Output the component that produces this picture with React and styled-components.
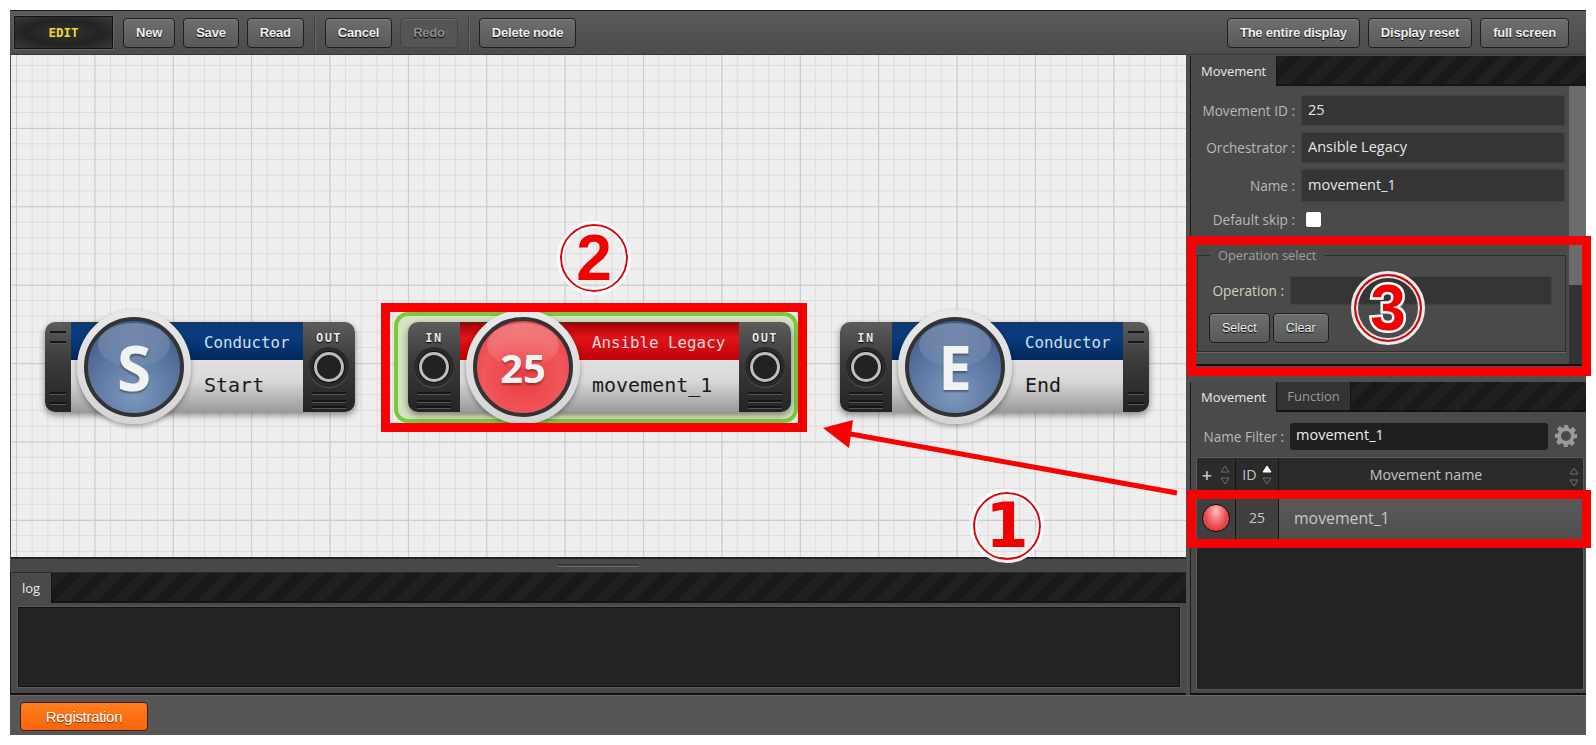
import React from "react";
import styled, { createGlobalStyle, css } from "styled-components";

const Global = createGlobalStyle`
  html, body { margin: 0; padding: 0; background: #fff; overflow: hidden; }
  body { font-family: "Liberation Sans", Arial, sans-serif; }
  * { box-sizing: border-box; }
`;

const Page = styled.div`
  position: relative;
  width: 1596px;
  height: 745px;
  padding: 10px 10px 10px 10px;
`;
const Frame = styled.div`
  width: 1576px;
  height: 725px;
  display: flex;
  flex-direction: column;
  background: #525252;
  border-top: 1px solid #10202c;
`;
const Toolbar = styled.div`
  height: 44px;
  flex: none;
  display: flex;
  align-items: center;
  padding: 0 17px 0 4px;
  gap: 8px;
  background: linear-gradient(#5a5a5a, #4c4c4c);
  border-bottom: 1px solid #3a3a3a;
`;
const ModeDisplay = styled.div`
  width: 99px;
  height: 33px;
  display: flex;
  align-items: center;
  justify-content: center;
  color: #f3d43a;
  font: bold 12.5px "DejaVu Sans Mono", monospace;
  background: radial-gradient(ellipse at center, #333 0%, #232323 55%, #3a3a3a 100%);
  border: 1px solid #111;
  box-shadow: 0 0 0 1px #666;
  margin-right: 2px;
`;
const Button = styled.button`
  height: 30px;
  padding: 0 ${p => p.$pad ?? 12}px;
  flex: none;
  color: ${p => p.disabled ? "#8c8c8c" : "#efefef"};
  font: ${p => p.$small ? "12.5px" : "bold 13px"} "Liberation Sans", Arial, sans-serif;
  letter-spacing: ${p => p.$small ? 0 : -0.2}px;
  text-shadow: 0 1px 1px #000;
  background: ${p => p.disabled ? "#555" : "linear-gradient(#6e6e6e, #595959)"};
  border: 1px solid ${p => p.disabled ? "#444" : "#1e1e1e"};
  border-radius: 4px;
  box-shadow: inset 0 1px 0 rgba(255,255,255,.12);
`;
const ToolDivider = styled.div`
  width: 1px;
  height: 36px;
  margin: 0 2px;
  background: #404040;
  box-shadow: 1px 0 0 #666;
`;
const Spacer = styled.div`
  flex: 1;
`;
const Middle = styled.div`
  height: 640px;
  flex: none;
  display: flex;
  gap: 4px;
  background: #4e4e4e;
`;
const LeftColumn = styled.div`
  width: 1176px;
  flex: none;
  display: flex;
  flex-direction: column;
`;
const RightColumn = styled.div`
  flex: 1;
  min-width: 0;
  display: flex;
  flex-direction: column;
  gap: 16px;
  padding-top: 1px;
`;
const Canvas = styled.div`
  position: relative;
  height: 504px;
  flex: none;
  margin-left: 1px;
  border-bottom: 2px solid #222;
  background-color: #eeeeee;
  background-image:
    linear-gradient(90deg, #cbcbcb 1px, transparent 1px),
    linear-gradient(#cbcbcb 1px, transparent 1px),
    linear-gradient(90deg, #dcdcdc 1px, transparent 1px),
    linear-gradient(#dcdcdc 1px, transparent 1px);
  background-size: 78.4px 78.4px, 78.4px 78.4px, 15.68px 15.68px, 15.68px 15.68px;
  background-position: 5px 73px, 5px 73px, 5px 10px, 5px 10px;
`;
const Splitter = styled.div`
  height: 14px;
  flex: none;
  display: flex;
  align-items: center;
  justify-content: center;
  background: #484848;
  border-bottom: 1px solid #2a2a2a;
`;
const Grip = styled.div`
  width: 82px;
  height: 3px;
  background: #3a3a3a;
  border-bottom: 1px solid #707070;
  border-radius: 2px;
`;
const Panel = styled.div`
  display: flex;
  flex-direction: column;
  flex: ${p => p.$grow ? 1 : "none"};
  height: ${p => p.$h ? p.$h + "px" : "auto"};
  background: #4a4a4a;
  border-left: 1px solid #1c1c1c;
  border-bottom: 2px solid #111;
  min-height: 0;
`;
const TabBar = styled.div`
  height: 30px;
  flex: none;
  display: flex;
  background: repeating-linear-gradient(-45deg, #191919 0 10px, #202020 10px 20px);
  border-bottom: 2px solid #141414;
`;
const Tab = styled.div`
  height: ${p => p.$active ? 30 : 28}px;
  padding: 0 ${p => p.$pad ?? 10}px;
  display: flex;
  align-items: center;
  color: ${p => p.$active ? "#e8e8e8" : "#9a9a9a"};
  font: 13px "Open Sans", sans-serif;
  background: ${p => p.$active ? "#4a4a4a" : "#333"};
  border-right: 1px solid #141414;
`;
const LogBody = styled.div`
  flex: 1;
  margin: 4px 6px 6px 7px;
  background: #232323;
  border: 1px solid #111;
  box-shadow: 0 0 0 1px #5a5a5a;
`;
const ScrollArea = styled.div`
  flex: 1;
  display: flex;
  min-height: 0;
`;
const PanelContent = styled.div`
  flex: 1;
  display: flex;
  flex-direction: column;
  padding: 9px 3px 0 0;
  gap: 6px;
`;
const Scrollbar = styled.div`
  width: 17px;
  flex: none;
  background: #333;
`;
const ScrollThumb = styled.div`
  height: 199px;
  background: #6c6c6c;
`;
const FieldRow = styled.div`
  display: flex;
  align-items: center;
  gap: 6px;
  padding-right: ${p => p.$right ?? 0}px;
`;
const Label = styled.label`
  flex: none;
  width: ${p => p.$w ?? 104}px;
  text-align: right;
  color: ${p => p.$bright ? "#d4d0c0" : "#b8b8b8"};
  font: 13.6px "Open Sans", sans-serif;
  white-space: nowrap;
`;
const FieldValue = styled.div`
  flex: 1;
  height: ${p => p.$h ?? 31}px;
  display: flex;
  align-items: center;
  padding: 0 6px 2px;
  color: #e6e6e6;
  font: 14.5px "Open Sans", sans-serif;
  background: #353535;
  border: 1px solid #424242;
`;
const Check = styled.div`
  width: 15px;
  height: 15px;
  margin-left: 5px;
  background: #fff;
  border-radius: 2px;
`;
const SkipRow = styled(FieldRow)`
  height: 15px;
  margin-top: 4px;
`;
const OperationBox = styled.fieldset`
  margin: 13px 0 0 6px;
  padding: 12px 13px 9px 11px;
  width: 369px;
  height: 106px;
  flex: none;
  border: 1px solid #2e2e2e;
  box-shadow: 0 1px 0 #666;
  display: flex;
  flex-direction: column;
  gap: 8px;
  min-width: 0;
`;
const Legend = styled.legend`
  margin-left: 1px;
  padding: 0 8px;
  color: #a0a0a0;
  font: 12.8px "Open Sans", sans-serif;
`;
const ButtonRow = styled.div`
  display: flex;
  gap: 3px;
`;
const FilterRow = styled.div`
  display: flex;
  align-items: center;
  gap: 6px;
  padding: 10px 8px 0 0;
  height: 38px;
  flex: none;
`;
const FilterInput = styled.div`
  flex: 1;
  height: 27px;
  display: flex;
  align-items: center;
  padding: 0 6px 3px;
  color: #eee;
  font: 14.5px "Open Sans", sans-serif;
  background: #1f1f1f;
  border-radius: 3px;
`;
const ListBox = styled.div`
  flex: 1;
  margin: 8px 3px 4px 6px;
  display: flex;
  flex-direction: column;
  background: #232323;
  box-shadow: 0 0 0 1px #5a5a5a;
  min-height: 0;
`;
const HeadRow = styled.div`
  height: 33px;
  flex: none;
  display: grid;
  grid-template-columns: 39px 43px 1fr;
  background: #2b2b2b;
`;
const HeadCell = styled.div`
  position: relative;
  display: flex;
  align-items: center;
  justify-content: center;
  gap: ${p => p.$gap ?? 4}px;
  padding: ${p => p.$last ? "0 10px 0 0" : "0"};
  color: #c4c4c4;
  font: 14.2px "Open Sans", sans-serif;
  border-right: ${p => p.$last ? "none" : "1px solid #161616"};
`;
const Plus = styled.span`
  font-size: 18px;
  font-weight: 600;
`;
const Sorter = styled.div`
  display: flex;
  flex-direction: column;
  gap: 4px;
  flex: none;
`;
const NameSorter = styled(Sorter)`
  position: absolute;
  right: 4px;
  top: 9px;
`;
const CaretIcon = styled.svg`
  display: block;
  width: 10px;
  height: 8px;
`;
const BodyRow = styled.div`
  height: 49px;
  flex: none;
  display: grid;
  grid-template-columns: 39px 43px 1fr;
  border-bottom: 1px solid #111;
`;
const BodyCell = styled.div`
  display: flex;
  align-items: center;
  justify-content: ${p => p.$name ? "flex-start" : "center"};
  padding: 5px 0 0 ${p => p.$name ? 15 : 0}px;
  color: #c8c8c8;
  font: ${p => p.$name ? 15.8 : 14}px "Open Sans", sans-serif;
  background: ${p => p.$name ? "linear-gradient(#5c5c5c, #4e4e4e)" : "#3f3f3f"};
  border-right: ${p => p.$name ? "none" : "1px solid #161616"};
`;
const Ball = styled.div`
  width: 28px;
  height: 28px;
  border-radius: 50%;
  border: 1px solid #200;
  background: radial-gradient(ellipse at 50% 25%, #ffc0c0 0%, #f57f7f 30%, #e53f46 65%, #f37a7a 100%);
`;
const Footer = styled.div`
  flex: 1;
  display: flex;
  align-items: center;
  padding: 2px 0 0 10px;
  border-top: 1px solid #6a6a6a;
  background: #565656;
`;
const RegisterButton = styled.button`
  width: 128px;
  height: 29px;
  color: #fff;
  font: 15px "Liberation Sans", Arial, sans-serif;
  letter-spacing: -0.3px;
  text-shadow: 0 1px 1px #7a3300;
  background: linear-gradient(#ff7d1e, #f9640c);
  border: 1px solid #4a2000;
  border-radius: 4px;
`;

/* Nodes on the free canvas */
const NodeHalo = styled.div`
  position: absolute;
  left: ${p => p.$x}px;
  top: 257px;
  width: 404px;
  height: 111px;
  border: 4px solid #7cc83c;
  border-radius: 14px;
  background: #d6e4c4;
`;
const NodeWrap = styled.div`
  position: absolute;
  left: ${p => p.$x}px;
  top: 267px;
  width: ${p => p.$w}px;
  height: 90px;
  display: flex;
  border-radius: 10px;
  box-shadow: 0 3px 7px rgba(0,0,0,.45);
`;
const Terminal = styled.div`
  position: relative;
  flex: none;
  width: ${p => p.$wide ? 52 : 26}px;
  background: linear-gradient(#5c5c5c, #3a3a3a 45%, #242424);
  border-radius: ${p => p.$side === "left" ? "10px 0 0 10px" : "0 10px 10px 0"};
  display: flex;
  flex-direction: column;
  align-items: center;
`;
const TermLabel = styled.div`
  margin-top: 9px;
  height: 14px;
  color: #e8e8e8;
  font: bold 12px "DejaVu Sans Mono", monospace;
  letter-spacing: 1.5px;
  text-shadow: 0 1px 1px #000;
`;
const Port = styled.div`
  margin-top: 2px;
  width: 40px;
  height: 40px;
  border-radius: 50%;
  display: flex;
  align-items: center;
  justify-content: center;
  background: #2a2a2a;
  box-shadow: 0 1px 0 #555;
`;
const PortHole = styled.div`
  width: 30px;
  height: 30px;
  border-radius: 50%;
  background: #222;
  border: 3px solid #bdbdbd;
  box-shadow: 0 0 0 1px #111;
`;
const Vent = styled.div`
  position: absolute;
  left: ${p => p.$wide ? 9 : 5}px;
  right: ${p => p.$wide ? 9 : 5}px;
  top: ${p => p.$top}px;
  height: 2px;
  background: #161616;
  box-shadow: 0 1px 0 #555;
`;
const NodeBody = styled.div`
  flex: 1;
  display: flex;
  flex-direction: column;
  padding-left: ${p => p.$textLeft}px;
  position: relative;
  background: linear-gradient(#f0f0f0, #d8d8d8 65%, #9a9a9a);
`;
const NodeStrip = styled.div`
  position: absolute;
  left: 0;
  right: 0;
  top: 0;
  height: 38px;
  background: ${p => p.$red
    ? "linear-gradient(#a80000, #e0141b 40%, #c00005)"
    : "linear-gradient(#0b3a78, #0a3b7c 40%, #00285f)"};
  border-top: 1px solid #333;
`;
const NodeType = styled.div`
  position: relative;
  height: 40px;
  display: flex;
  align-items: center;
  color: ${p => p.$red ? "#ffd9d9" : "#cfe0f4"};
  font: 15.8px "DejaVu Sans Mono", monospace;
  white-space: nowrap;
`;
const NodeName = styled.div`
  position: relative;
  height: 46px;
  display: flex;
  align-items: center;
  color: #1a1a1a;
  font: 20px "DejaVu Sans Mono", monospace;
  white-space: nowrap;
`;
const Disc = styled.div`
  position: absolute;
  left: ${p => p.$x}px;
  top: 0;
  margin-top: -12px;
  width: 114px;
  height: 114px;
  border-radius: 50%;
  display: flex;
  align-items: center;
  justify-content: center;
  background: linear-gradient(#e8e8e8, #d4d4d4);
  box-shadow: 0 2px 5px rgba(0,0,0,.35);
`;
const DiscFace = styled.div`
  position: relative;
  overflow: hidden;
  width: 100px;
  height: 100px;
  border-radius: 50%;
  border: 4px solid #333;
  display: flex;
  align-items: center;
  justify-content: center;
  background: ${p => p.$red
    ? "radial-gradient(circle at 50% 60%, #ec3c42 0%, #f0565a 55%, #e23c42 100%)"
    : "radial-gradient(circle at 50% 78%, #7f99bd 0%, #56739d 55%, #335082 100%)"};
`;
const Gloss = styled.div`
  position: absolute;
  left: 10px;
  right: 10px;
  top: 2px;
  height: 44px;
  border-radius: 50%;
  background: linear-gradient(rgba(255,255,255,.26), rgba(255,255,255,.05));
`;
const DiscLetter = styled.div`
  position: relative;
  color: #f2f2f2;
  font: bold ${p => p.$size}px "Open Sans", sans-serif;
  text-shadow: 0 2px 2px rgba(0,0,0,.35);
`;

/* Annotations over the page */
const Highlight = styled.div`
  position: absolute;
  left: ${p => p.$x}px;
  top: ${p => p.$y}px;
  width: ${p => p.$w}px;
  height: ${p => p.$h}px;
  border: ${p => p.$b}px solid #fa0000;
  pointer-events: none;
`;
const NumberMark = styled.div`
  position: absolute;
  left: ${p => p.$x - 34}px;
  top: ${p => p.$y - 34}px;
  width: 68px;
  height: 68px;
  border-radius: 50%;
  display: flex;
  align-items: center;
  justify-content: center;
  border: 2px solid #e0000a;
  outline: 3px solid rgba(255,255,255,.9);
  outline-offset: 0;
  box-shadow: inset 0 0 0 2px rgba(255,255,255,.85);
  color: #f20000;
  font: bold ${p => p.$serif ? "62px \"DejaVu Sans\"" : "64px \"Liberation Sans\""}, sans-serif;
  line-height: 1;
  ${p => p.$halo && css`
    -webkit-text-stroke: 5px #fff;
    paint-order: stroke fill;
  `}
`;
const ArrowLayer = styled.svg`
  position: absolute;
  left: 0;
  top: 0;
  width: 1596px;
  height: 745px;
  pointer-events: none;
`;

const Gear = () => (
  <svg width="24" height="24" viewBox="0 0 24 24" style={{ flex: "none" }}>
    <path
      fill="#9a9a9a"
      fillRule="evenodd"
      d="M10 1h4l.6 3.1 1.9.8 2.6-1.8 2.8 2.8-1.8 2.6.8 1.9L23 10v4l-3.1.6-.8 1.9 1.8 2.6-2.8 2.8-2.6-1.8-1.9.8L14 23h-4l-.6-3.1-1.9-.8-2.6 1.8-2.8-2.8 1.8-2.6-.8-1.9L1 14v-4l3.1-.6.8-1.9-1.8-2.6 2.8-2.8 2.6 1.8 1.9-.8L10 1zm2 6a5 5 0 1 0 0 10 5 5 0 0 0 0-10z"
    />
  </svg>
);

const Caret = ({ down, on }) => (
  <CaretIcon viewBox="0 0 10 8">
    <polygon
      points={down ? "1,1 9,1 5,7" : "5,1 9,7 1,7"}
      fill={on ? "#fff" : "none"}
      stroke={on ? "#fff" : "#6e6e6e"}
      strokeWidth="1"
    />
  </CaretIcon>
);

const Term = ({ side, label }) => (
  <Terminal $side={side} $wide>
    <TermLabel>{label}</TermLabel>
    <Port><PortHole /></Port>
    <Vent $wide $top={70} />
    <Vent $wide $top={78} />
    <Vent $wide $top={84} />
  </Terminal>
);
const Handle = ({ side }) => (
  <Terminal $side={side}>
    <Vent $top={9} />
    <Vent $top={19} />
    <Vent $top={70} />
    <Vent $top={80} />
  </Terminal>
);

const Node = ({ x, w, left, right, type, name, mark, markSize, red, discX, textLeft }) => (
  <NodeWrap $x={x} $w={w}>
    {left}
    <NodeBody $textLeft={textLeft}>
      <NodeStrip $red={red} />
      <NodeType $red={red}>{type}</NodeType>
      <NodeName>{name}</NodeName>
      <Disc $x={discX}>
        <DiscFace $red={red}>
          <Gloss />
          <DiscLetter $size={markSize}>{mark}</DiscLetter>
        </DiscFace>
      </Disc>
    </NodeBody>
    {right}
  </NodeWrap>
);

export default function App() {
  return (
    <Page>
      <Global />
      <Frame>
        <Toolbar>
          <ModeDisplay>EDIT</ModeDisplay>
          <Button>New</Button>
          <Button>Save</Button>
          <Button>Read</Button>
          <ToolDivider />
          <Button>Cancel</Button>
          <Button disabled>Redo</Button>
          <ToolDivider />
          <Button>Delete node</Button>
          <Spacer />
          <Button>The entire display</Button>
          <Button>Display reset</Button>
          <Button>full screen</Button>
        </Toolbar>
        <Middle>
          <LeftColumn>
            <Canvas>
              <NodeHalo $x={383} />
              <Node x={34} w={310} left={<Handle side="left" />}
                right={<Term side="right" label="OUT" />}
                type="Conductor" name="Start" mark="S" markSize={62}
                discX={6} textLeft={133} />
              <Node x={397} w={383} left={<Term side="left" label="IN" />}
                right={<Term side="right" label="OUT" />}
                type="Ansible Legacy" name="movement_1" mark="25" markSize={40} red
                discX={6} textLeft={132} />
              <Node x={829} w={309} left={<Term side="left" label="IN" />}
                right={<Handle side="right" />}
                type="Conductor" name="End" mark="E" markSize={60}
                discX={6} textLeft={133} />
            </Canvas>
            <Splitter><Grip /></Splitter>
            <Panel $grow>
              <TabBar><Tab $active $pad={11}>log</Tab></TabBar>
              <LogBody />
            </Panel>
          </LeftColumn>
          <RightColumn>
            <Panel $h={310}>
              <TabBar><Tab $active>Movement</Tab></TabBar>
              <ScrollArea>
                <PanelContent>
                  <FieldRow $right={1}><Label>Movement ID :</Label><FieldValue>25</FieldValue></FieldRow>
                  <FieldRow $right={1}><Label>Orchestrator :</Label><FieldValue>Ansible Legacy</FieldValue></FieldRow>
                  <FieldRow $right={1}><Label>Name :</Label><FieldValue $h={33}>movement_1</FieldValue></FieldRow>
                  <SkipRow><Label>Default skip :</Label><Check /></SkipRow>
                  <OperationBox>
                    <Legend>Operation select</Legend>
                    <FieldRow>
                      <Label $w={75} $bright>Operation :</Label>
                      <FieldValue $h={29} />
                    </FieldRow>
                    <ButtonRow>
                      <Button $small $pad={12}>Select</Button>
                      <Button $small $pad={12}>Clear</Button>
                    </ButtonRow>
                  </OperationBox>
                </PanelContent>
                <Scrollbar><ScrollThumb /></Scrollbar>
              </ScrollArea>
            </Panel>
            <Panel $grow>
              <TabBar>
                <Tab $active>Movement</Tab>
                <Tab $pad={10}>Function</Tab>
              </TabBar>
              <FilterRow>
                <Label $w={93}>Name Filter :</Label>
                <FilterInput>movement_1</FilterInput>
                <Gear />
              </FilterRow>
              <ListBox>
                <HeadRow>
                  <HeadCell $gap={8}><Plus>+</Plus><Sorter><Caret /><Caret down /></Sorter></HeadCell>
                  <HeadCell $gap={5}>ID<Sorter><Caret on /><Caret down /></Sorter></HeadCell>
                  <HeadCell $last>Movement name<NameSorter><Caret /><Caret down /></NameSorter></HeadCell>
                </HeadRow>
                <BodyRow>
                  <BodyCell><Ball /></BodyCell>
                  <BodyCell>25</BodyCell>
                  <BodyCell $name>movement_1</BodyCell>
                </BodyRow>
              </ListBox>
            </Panel>
          </RightColumn>
        </Middle>
        <Footer><RegisterButton>Registration</RegisterButton></Footer>
      </Frame>

      <Highlight $x={381} $y={303} $w={426} $h={129} $b={9} />
      <Highlight $x={1187} $y={236} $w={404} $h={140} $b={9} />
      <Highlight $x={1187} $y={490} $w={404} $h={58} $b={9} />
      <ArrowLayer viewBox="0 0 1596 745">
        <line x1="1177" y1="493" x2="845" y2="433" stroke="#fa0000" strokeWidth="5" />
        <polygon points="823,428 853,420 849,448" fill="#fa0000" />
      </ArrowLayer>
      <NumberMark $x={1007} $y={526} $serif>1</NumberMark>
      <NumberMark $x={594} $y={258}>2</NumberMark>
      <NumberMark $x={1388} $y={308} $halo>3</NumberMark>
    </Page>
  );
}
